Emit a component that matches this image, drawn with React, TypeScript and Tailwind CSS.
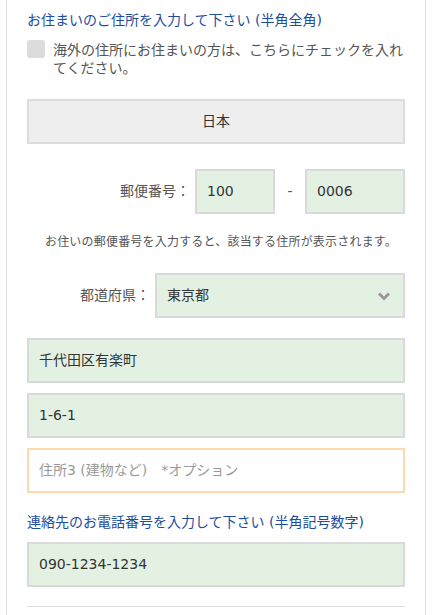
import React from "react";

const font = { fontFamily: '"DejaVu Sans", "Noto Sans CJK JP", sans-serif' };

function Field({ value, placeholder, orange }: { value?: string; placeholder?: string; orange?: boolean }) {
  return (
    <div
      className={
        "h-[45px] flex items-center px-[10px] text-[14px] " +
        (orange ? "border-2 border-[#fdd9b0] bg-white text-[#999]" : "border-2 border-[#d9d9d9] bg-[#e3f1e3] text-[#333]")
      }
    >
      {value ?? placeholder}
    </div>
  );
}

export default function App() {
  return (
    <div className="w-[442px] h-[615px] bg-white overflow-hidden" style={font}>
      <div className="ml-[6px] w-[420px] h-[615px] border-x border-[#dddddd] px-[20px] pt-[10px]">
        <div className="text-[14px] leading-[20px] text-[#1d4d9e]">お住まいのご住所を入力して下さい (半角全角)</div>
        <div className="mt-[10px] flex items-start">
          <div className="w-[18px] h-[18px] rounded-[3px] bg-[#dcdcdc] shrink-0" />
          <div className="ml-[8px] text-[14px] leading-[18px] text-[#555] mt-[1px]">
            海外の住所にお住まいの方は、こちらにチェックを入れてください。
          </div>
        </div>
        <div className="mt-[22px] h-[45px] border-2 border-[#dcdcdc] bg-[#eeeeee] flex items-center justify-center text-[14px] text-[#333]">
          日本
        </div>
        <div className="mt-[25px] flex items-center">
          <div className="flex-1 text-right text-[14px] text-[#555] pr-[5px]">郵便番号：</div>
          <div className="w-[80px]">
            <Field value="100" />
          </div>
          <div className="w-[30px] text-center text-[14px] text-[#555]">-</div>
          <div className="w-[100px]">
            <Field value="0006" />
          </div>
        </div>
        <div className="mt-[19px] pl-[10px] text-center text-[12px] leading-[18px] text-[#555] tracking-[0.2px]">
          お住いの郵便番号を入力すると、該当する住所が表示されます。
        </div>
        <div className="mt-[22px] flex items-center">
          <div className="flex-1 text-right text-[14px] text-[#555] pr-[5px]">都道府県：</div>
          <div className="w-[250px] h-[45px] border-2 border-[#d9d9d9] bg-[#e3f1e3] flex items-center justify-between pl-[10px] pr-[12px] text-[14px] text-[#333]">
            <span>東京都</span>
            <svg width="14" height="10" viewBox="0 0 14 10">
              <path d="M2 2.5 L7 7.5 L12 2.5" fill="none" stroke="#999" strokeWidth="3" />
            </svg>
          </div>
        </div>
        <div className="mt-[20px]">
          <Field value="千代田区有楽町" />
        </div>
        <div className="mt-[10px]">
          <Field value="1-6-1" />
        </div>
        <div className="mt-[10px]">
          <Field placeholder="住所3 (建物など)　*オプション" orange />
        </div>
        <div className="mt-[19px] text-[14px] leading-[20px] text-[#1d4d9e]">連絡先のお電話番号を入力して下さい (半角記号数字)</div>
        <div className="mt-[10px]">
          <Field value="090-1234-1234" />
        </div>
        <div className="mt-[19px] border-t border-[#dddddd]" />
      </div>
    </div>
  );
}
